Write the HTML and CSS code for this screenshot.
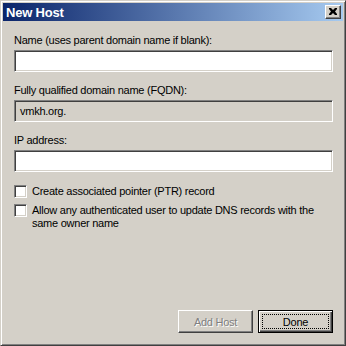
FILE: index.html
```html
<!DOCTYPE html>
<html>
<head>
<meta charset="utf-8">
<link rel="stylesheet" href="styles.css">
</head>
<body>
<div class="window">
  <div class="titlebar">
    <span class="title">New Host</span>
    <span class="close"><svg width="8" height="7" viewBox="0 0 8 7"><path d="M0 0h2l2 2 2-2h2v1L6 3.5 8 6v1H6L4 5 2 7H0V6l2-2.5L0 1z" fill="#000"/></svg></span>
  </div>
  <div class="content">
    <div class="field">
      <div class="label">Name (uses parent domain name if blank):</div>
      <div class="input"></div>
    </div>
    <div class="field">
      <div class="label">Fully qualified domain name (FQDN):</div>
      <div class="input readonly">vmkh.org.</div>
    </div>
    <div class="field">
      <div class="label">IP address:</div>
      <div class="input"></div>
    </div>
    <div class="check"><span class="box"></span><span class="ctext">Create associated pointer (PTR) record</span></div>
    <div class="check"><span class="box"></span><span class="ctext">Allow any authenticated user to update DNS records with the same owner name</span></div>
    <div class="spacer"></div>
    <div class="buttons">
      <div class="btn disabled">Add Host</div>
      <div class="btn default"><span class="focus">Done</span></div>
    </div>
  </div>
</div>
</body>
</html>
```
FILE: styles.css
```css
* { box-sizing: border-box; }
html, body { margin: 0; padding: 0; background: #d4d0c8; }
body { font-family: "Liberation Sans", Arial, sans-serif; font-size: 11px; letter-spacing: -0.25px; color: #000; }
.window {
  width: 346px; height: 346px;
  background: #d4d0c8;
  border: 1px solid; border-color: #d4d0c8 #404040 #404040 #d4d0c8;
  box-shadow: inset 1px 1px #fff, inset -1px -1px #808080;
  padding: 2px;
  display: flex; flex-direction: column;
}
.titlebar {
  height: 18px;
  background: linear-gradient(to right, #0a246a, #a6caf0);
  display: flex; align-items: center; justify-content: space-between;
  padding: 0 2px 0 3px;
}
.title { color: #fff; font-weight: bold; font-size: 13px; letter-spacing: -0.2px; }
.close {
  width: 16px; height: 14px; background: #d4d0c8;
  border: 1px solid; border-color: #fff #404040 #404040 #fff;
  box-shadow: inset -1px -1px #808080;
  display: flex; align-items: center; justify-content: center;
  padding-bottom: 1px;
}
.close svg { display: block; }
.content {
  flex: 1; display: flex; flex-direction: column;
  padding: 13px 10px 10px 11px;
}
.field { display: flex; flex-direction: column; margin-bottom: 12px; }
.label { line-height: 13px; margin-bottom: 3px; }
.input {
  height: 22px; background: #fff;
  border: 1px solid; border-color: #808080 #fff #fff #808080;
  box-shadow: inset 1px 1px #404040, inset -1px -1px #d4d0c8;
  padding: 3px 5px; line-height: 15px;
}
.input.readonly { background: #d4d0c8; }
.check { display: flex; align-items: flex-start; margin-bottom: 6px; margin-top: 1px; }
.check + .check { margin-top: 0; }
.box {
  flex: none; width: 13px; height: 13px; background: #fff;
  border: 1px solid; border-color: #808080 #fff #fff #808080;
  box-shadow: inset 1px 1px #404040, inset -1px -1px #d4d0c8;
  margin-right: 5px;
}
.ctext { line-height: 13px; }
.spacer { flex: 1; }
.buttons { display: flex; justify-content: flex-end; gap: 5px; }
.btn {
  width: 75px; height: 23px;
  display: flex; align-items: center; justify-content: center;
  border: 1px solid; border-color: #fff #404040 #404040 #fff;
  box-shadow: inset -1px -1px #808080;
}
.btn.disabled { color: #808080; text-shadow: 1px 1px #fff; }
.btn.default {
  border: 1px solid #000;
  box-shadow: inset 1px 1px #fff, inset -1px -1px #404040, inset -2px -2px #808080;
  padding: 3px;
}
.focus {
  flex: 1; align-self: stretch;
  display: flex; align-items: center; justify-content: center;
  border: 1px dotted #000;
}
```
